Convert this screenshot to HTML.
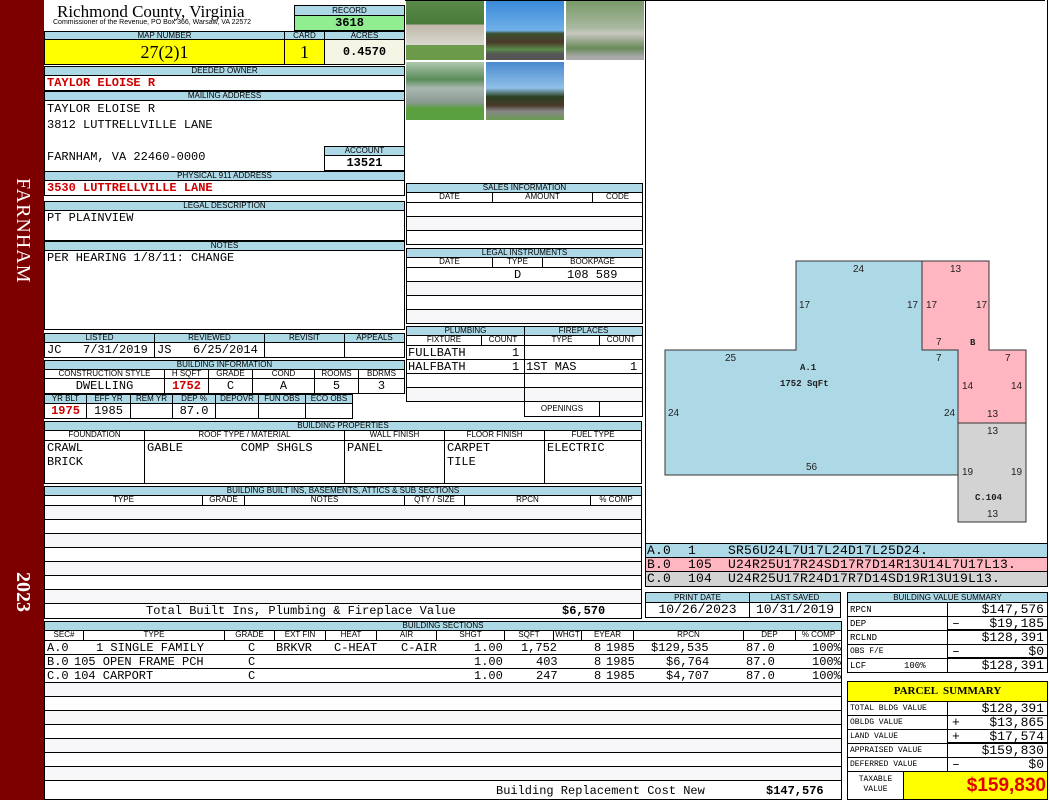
<!DOCTYPE html>
<html><head><meta charset="utf-8"><style>
*{margin:0;padding:0;box-sizing:border-box}
body{width:1050px;height:800px;position:relative;background:#fff;overflow:hidden;font-family:"Liberation Mono",monospace;font-size:12px;color:#000}
div,span.a{position:absolute}
span.a{top:0;white-space:pre}
.h{background:#add8e6;border:1px solid #000;font:8px "Liberation Sans",sans-serif;text-align:center;line-height:8px;white-space:nowrap;overflow:hidden}
.s{border:1px solid #000;font:8px "Liberation Sans",sans-serif;text-align:center;line-height:8px;white-space:nowrap;background:#fff}
.b{border:1px solid #000;background:#fff;white-space:pre;line-height:14px;padding-left:2px;overflow:hidden}
.c{text-align:center;padding:0}
.r{text-align:right;padding-right:3px}
.red{color:#d00000;font-weight:bold}
.bar{left:0;top:0;width:44px;height:800px;background:#7d0000}
.vt{color:#fff;font:20px "Liberation Serif",serif;transform:rotate(90deg);transform-origin:left top;white-space:nowrap}
.ph{border:1px solid #fff}
.cd{font-size:13px;letter-spacing:0.2px;line-height:13px}
</style></head><body>
<div class="bar"></div>
<div class="vt" style="left:34px;top:178px;letter-spacing:1px">FARNHAM</div>
<div class="vt" style="left:34px;top:572px;font-weight:bold">2023</div>

<div style="left:57px;top:2px;font:17px 'Liberation Serif',serif">Richmond County, Virginia</div>
<div style="left:53px;top:19px;font:7px 'Liberation Sans',sans-serif;white-space:nowrap">Commissioner of the Revenue, PO Box 366, Warsaw, VA 22572</div>
<div class="h" style="left:294px;top:5px;width:111px;height:11px;line-height:10px">RECORD</div>
<div class="b c" style="left:294px;top:15px;width:111px;height:16px;background:#90ee90;font-weight:bold;line-height:14px">3618</div>

<div class="h" style="left:44px;top:31px;width:241px;height:9px">MAP NUMBER</div>
<div class="h" style="left:284px;top:31px;width:41px;height:9px">CARD</div>
<div class="h" style="left:324px;top:31px;width:81px;height:9px">ACRES</div>
<div class="b c" style="left:44px;top:39px;width:241px;height:26px;background:#ffff00;font:18px 'Liberation Serif',serif;line-height:24px">27(2)1</div>
<div class="b c" style="left:284px;top:39px;width:41px;height:26px;background:#ffff00;font:18px 'Liberation Serif',serif;line-height:24px">1</div>
<div class="b c" style="left:324px;top:39px;width:81px;height:26px;background:#f5f5e6;font-weight:bold;line-height:24px">0.4570</div>

<div class="h" style="left:44px;top:66px;width:361px;height:10px">DEEDED OWNER</div>
<div class="b red" style="left:44px;top:75px;width:361px;height:16px">TAYLOR ELOISE R</div>
<div class="h" style="left:44px;top:91px;width:361px;height:10px">MAILING ADDRESS</div>
<div class="b" style="left:44px;top:100px;width:361px;height:72px;line-height:16px;padding-top:0">TAYLOR ELOISE R
3812 LUTTRELLVILLE LANE

FARNHAM, VA 22460-0000</div>
<div class="h" style="left:324px;top:146px;width:81px;height:10px">ACCOUNT</div>
<div class="b c" style="left:324px;top:155px;width:81px;height:16px;font-weight:bold">13521</div>
<div class="h" style="left:44px;top:171px;width:361px;height:10px">PHYSICAL 911 ADDRESS</div>
<div class="b red" style="left:44px;top:180px;width:361px;height:16px">3530 LUTTRELLVILLE LANE</div>
<div class="h" style="left:44px;top:201px;width:361px;height:10px">LEGAL DESCRIPTION</div>
<div class="b" style="left:44px;top:210px;width:361px;height:31px">PT PLAINVIEW</div>
<div class="h" style="left:44px;top:241px;width:361px;height:10px">NOTES</div>
<div class="b" style="left:44px;top:250px;width:361px;height:80px">PER HEARING 1/8/11: CHANGE</div>

<div class="h" style="left:44px;top:333px;width:111px;height:10px">LISTED</div>
<div class="h" style="left:154px;top:333px;width:111px;height:10px">REVIEWED</div>
<div class="h" style="left:264px;top:333px;width:81px;height:10px">REVISIT</div>
<div class="h" style="left:344px;top:333px;width:61px;height:10px">APPEALS</div>
<div class="b" style="left:44px;top:342px;width:111px;height:16px">JC   7/31/2019</div>
<div class="b" style="left:154px;top:342px;width:111px;height:16px">JS   6/25/2014</div>
<div class="b" style="left:264px;top:342px;width:81px;height:16px"></div>
<div class="b" style="left:344px;top:342px;width:61px;height:16px"></div>

<div class="h" style="left:44px;top:360px;width:361px;height:10px">BUILDING INFORMATION</div>
<div class="s" style="left:44px;top:369px;width:121px;height:10px">CONSTRUCTION STYLE</div>
<div class="s" style="left:164px;top:369px;width:45px;height:10px">H SQFT</div>
<div class="s" style="left:208px;top:369px;width:45px;height:10px">GRADE</div>
<div class="s" style="left:252px;top:369px;width:63px;height:10px">COND</div>
<div class="s" style="left:314px;top:369px;width:45px;height:10px">ROOMS</div>
<div class="s" style="left:358px;top:369px;width:47px;height:10px">BDRMS</div>
<div class="b c" style="left:44px;top:378px;width:121px;height:16px">DWELLING</div>
<div class="b c red" style="left:164px;top:378px;width:45px;height:16px">1752</div>
<div class="b c" style="left:208px;top:378px;width:45px;height:16px">C</div>
<div class="b c" style="left:252px;top:378px;width:63px;height:16px">A</div>
<div class="b c" style="left:314px;top:378px;width:45px;height:16px">5</div>
<div class="b c" style="left:358px;top:378px;width:47px;height:16px">3</div>
<div class="s" style="left:44px;top:394px;width:43px;height:10px;background:#add8e6">YR BLT</div>
<div class="s" style="left:86px;top:394px;width:45px;height:10px;background:#add8e6">EFF YR</div>
<div class="s" style="left:130px;top:394px;width:43px;height:10px;background:#add8e6">REM YR</div>
<div class="s" style="left:172px;top:394px;width:44px;height:10px;background:#add8e6">DEP %</div>
<div class="s" style="left:215px;top:394px;width:44px;height:10px;background:#add8e6">DEPOVR</div>
<div class="s" style="left:258px;top:394px;width:48px;height:10px;background:#add8e6">FUN OBS</div>
<div class="s" style="left:305px;top:394px;width:48px;height:10px;background:#add8e6">ECO OBS</div>
<div class="b c red" style="left:44px;top:403px;width:43px;height:16px">1975</div>
<div class="b c" style="left:86px;top:403px;width:45px;height:16px">1985</div>
<div class="b" style="left:130px;top:403px;width:43px;height:16px"></div>
<div class="b c" style="left:172px;top:403px;width:44px;height:16px">87.0</div>
<div class="b" style="left:215px;top:403px;width:44px;height:16px"></div>
<div class="b" style="left:258px;top:403px;width:48px;height:16px"></div>
<div class="b" style="left:305px;top:403px;width:48px;height:16px"></div>

<div class="h" style="left:44px;top:421px;width:598px;height:10px">BUILDING PROPERTIES</div>
<div class="s" style="left:44px;top:430px;width:101px;height:11px">FOUNDATION</div>
<div class="s" style="left:144px;top:430px;width:201px;height:11px">ROOF TYPE / MATERIAL</div>
<div class="s" style="left:344px;top:430px;width:101px;height:11px">WALL FINISH</div>
<div class="s" style="left:444px;top:430px;width:101px;height:11px">FLOOR FINISH</div>
<div class="s" style="left:544px;top:430px;width:98px;height:11px">FUEL TYPE</div>
<div class="b" style="left:44px;top:440px;width:101px;height:44px">CRAWL
BRICK</div>
<div class="b" style="left:144px;top:440px;width:201px;height:44px">GABLE        COMP SHGLS</div>
<div class="b" style="left:344px;top:440px;width:101px;height:44px">PANEL</div>
<div class="b" style="left:444px;top:440px;width:101px;height:44px">CARPET
TILE</div>
<div class="b" style="left:544px;top:440px;width:98px;height:44px">ELECTRIC</div>

<div class="h" style="left:44px;top:486px;width:598px;height:10px">BUILDING BUILT INS, BASEMENTS, ATTICS &amp; SUB SECTIONS</div>
<div class="s" style="left:44px;top:495px;width:159px;height:11px">TYPE</div>
<div class="s" style="left:202px;top:495px;width:43px;height:11px">GRADE</div>
<div class="s" style="left:244px;top:495px;width:161px;height:11px">NOTES</div>
<div class="s" style="left:404px;top:495px;width:61px;height:11px">QTY / SIZE</div>
<div class="s" style="left:464px;top:495px;width:127px;height:11px">RPCN</div>
<div class="s" style="left:590px;top:495px;width:52px;height:11px">% COMP</div>
<div class="b" style="left:44px;top:505px;width:598px;height:15px;background:#f7f7fa"></div>
<div class="b" style="left:44px;top:519px;width:598px;height:15px"></div>
<div class="b" style="left:44px;top:533px;width:598px;height:15px;background:#f7f7fa"></div>
<div class="b" style="left:44px;top:547px;width:598px;height:15px"></div>
<div class="b" style="left:44px;top:561px;width:598px;height:15px;background:#f7f7fa"></div>
<div class="b" style="left:44px;top:575px;width:598px;height:15px"></div>
<div class="b" style="left:44px;top:589px;width:598px;height:15px;background:#f7f7fa"></div>
<div class="b" style="left:44px;top:603px;width:598px;height:16px"><span class="a" style="left:101px">Total Built Ins, Plumbing &amp; Fireplace Value</span><span class="a" style="left:517px;font-weight:bold">$6,570</span></div>

<div class="h" style="left:44px;top:621px;width:798px;height:10px">BUILDING SECTIONS</div>
<div class="s" style="left:44px;top:630px;width:40px;height:11px">SEC#</div>
<div class="s" style="left:83px;top:630px;width:142px;height:11px">TYPE</div>
<div class="s" style="left:224px;top:630px;width:51px;height:11px">GRADE</div>
<div class="s" style="left:274px;top:630px;width:52px;height:11px">EXT FIN</div>
<div class="s" style="left:325px;top:630px;width:52px;height:11px">HEAT</div>
<div class="s" style="left:376px;top:630px;width:61px;height:11px">AIR</div>
<div class="s" style="left:436px;top:630px;width:69px;height:11px">SHGT</div>
<div class="s" style="left:504px;top:630px;width:50px;height:11px">SQFT</div>
<div class="s" style="left:553px;top:630px;width:29px;height:11px">WHGT</div>
<div class="s" style="left:581px;top:630px;width:53px;height:11px">EYEAR</div>
<div class="s" style="left:633px;top:630px;width:111px;height:11px">RPCN</div>
<div class="s" style="left:743px;top:630px;width:53px;height:11px">DEP</div>
<div class="s" style="left:795px;top:630px;width:47px;height:11px">% COMP</div>

<div class="b" style="left:44px;top:640px;width:798px;height:15px">
<span class="a" style="left:2px">A.0</span><span class="a" style="left:51px">1 SINGLE FAMILY</span><span class="a" style="left:203px">C</span><span class="a" style="left:231px">BRKVR</span><span class="a" style="left:289px">C-HEAT</span><span class="a" style="left:356px">C-AIR</span><span class="a" style="left:429px">1.00</span><span class="a" style="left:476px">1,752</span><span class="a" style="left:549px">8</span><span class="a" style="left:561px">1985</span><span class="a" style="left:606px">$129,535</span><span class="a" style="left:701px">87.0</span><span class="a" style="left:767px">100%</span></div>
<div class="b" style="left:44px;top:654px;width:798px;height:15px">
<span class="a" style="left:2px">B.0</span><span class="a" style="left:29px">105 OPEN FRAME PCH</span><span class="a" style="left:203px">C</span><span class="a" style="left:429px">1.00</span><span class="a" style="left:491px">403</span><span class="a" style="left:549px">8</span><span class="a" style="left:561px">1985</span><span class="a" style="left:621px">$6,764</span><span class="a" style="left:701px">87.0</span><span class="a" style="left:767px">100%</span></div>
<div class="b" style="left:44px;top:668px;width:798px;height:15px">
<span class="a" style="left:2px">C.0</span><span class="a" style="left:29px">104 CARPORT</span><span class="a" style="left:203px">C</span><span class="a" style="left:429px">1.00</span><span class="a" style="left:491px">247</span><span class="a" style="left:549px">8</span><span class="a" style="left:561px">1985</span><span class="a" style="left:621px">$4,707</span><span class="a" style="left:701px">87.0</span><span class="a" style="left:767px">100%</span></div>
<div class="b" style="left:44px;top:682px;width:798px;height:15px;background:#f7f7fa"></div>
<div class="b" style="left:44px;top:696px;width:798px;height:15px"></div>
<div class="b" style="left:44px;top:710px;width:798px;height:15px;background:#f7f7fa"></div>
<div class="b" style="left:44px;top:724px;width:798px;height:15px"></div>
<div class="b" style="left:44px;top:738px;width:798px;height:15px;background:#f7f7fa"></div>
<div class="b" style="left:44px;top:752px;width:798px;height:15px"></div>
<div class="b" style="left:44px;top:766px;width:798px;height:15px;background:#f7f7fa"></div>
<div class="b" style="left:44px;top:780px;width:798px;height:20px;line-height:20px"><span class="a" style="left:451px;line-height:20px">Building Replacement Cost New</span><span class="a" style="left:721px;font-weight:bold;line-height:20px">$147,576</span></div>

<!-- photos -->
<div class="ph" style="left:405px;top:0;width:80px;height:61px;background:linear-gradient(#5a8a4a 0,#4a7a3a 40%,#c0b8a8 40%,#d8d8d0 75%,#6a9a4a 75%)"></div>
<div class="ph" style="left:485px;top:0;width:80px;height:61px;background:linear-gradient(#3a8ad8 0,#70b0e8 50%,#3a5030 55%,#4a3a2a 70%,#5a8a4a 82%,#555 90%)"></div>
<div class="ph" style="left:565px;top:0;width:80px;height:61px;background:linear-gradient(#7a9a6a 0,#a8b8a0 45%,#c8c8c0 55%,#6a8a5a 80%,#aaa 95%)"></div>
<div class="ph" style="left:405px;top:61px;width:80px;height:60px;background:linear-gradient(#b0c8b0 0,#5a8a5a 30%,#a8b8b0 45%,#8a9a90 70%,#5aa040 80%)"></div>
<div class="ph" style="left:485px;top:61px;width:80px;height:60px;background:linear-gradient(#4a8ad0 0,#90c0e8 45%,#2a4020 60%,#4a3a2a 75%,#888 85%,#6a9a50 100%)"></div>
<div style="left:645px;top:0;width:1px;height:545px;background:#000"></div>
<div style="left:405px;top:0;width:640px;height:1px;background:#000"></div>
<div style="left:1047px;top:0;width:1px;height:545px;background:#000"></div>

<div class="h" style="left:406px;top:183px;width:237px;height:10px">SALES INFORMATION</div>
<div class="s" style="left:406px;top:192px;width:87px;height:11px">DATE</div>
<div class="s" style="left:492px;top:192px;width:101px;height:11px">AMOUNT</div>
<div class="s" style="left:592px;top:192px;width:51px;height:11px">CODE</div>
<div class="b" style="left:406px;top:202px;width:237px;height:15px"></div>
<div class="b" style="left:406px;top:216px;width:237px;height:15px;background:#f7f7fa"></div>
<div class="b" style="left:406px;top:230px;width:237px;height:15px"></div>
<div class="h" style="left:406px;top:248px;width:237px;height:10px">LEGAL INSTRUMENTS</div>
<div class="s" style="left:406px;top:257px;width:87px;height:11px">DATE</div>
<div class="s" style="left:492px;top:257px;width:51px;height:11px">TYPE</div>
<div class="s" style="left:542px;top:257px;width:101px;height:11px">BOOKPAGE</div>
<div class="b" style="left:406px;top:267px;width:237px;height:15px"><span class="a" style="left:107px">D</span><span class="a" style="left:160px">108 589</span></div>
<div class="b" style="left:406px;top:281px;width:237px;height:15px;background:#f7f7fa"></div>
<div class="b" style="left:406px;top:295px;width:237px;height:15px"></div>
<div class="b" style="left:406px;top:309px;width:237px;height:15px;background:#f7f7fa"></div>

<div class="h" style="left:406px;top:326px;width:119px;height:10px">PLUMBING</div>
<div class="h" style="left:524px;top:326px;width:119px;height:10px">FIREPLACES</div>
<div class="s" style="left:406px;top:335px;width:76px;height:11px">FIXTURE</div>
<div class="s" style="left:481px;top:335px;width:44px;height:11px">COUNT</div>
<div class="s" style="left:524px;top:335px;width:76px;height:11px">TYPE</div>
<div class="s" style="left:599px;top:335px;width:44px;height:11px">COUNT</div>
<div class="b" style="left:406px;top:345px;width:119px;height:15px"><span class="a" style="left:1px">FULLBATH</span><span class="a" style="left:105px">1</span></div>
<div class="b" style="left:406px;top:359px;width:119px;height:15px"><span class="a" style="left:1px">HALFBATH</span><span class="a" style="left:105px">1</span></div>
<div class="b" style="left:406px;top:373px;width:119px;height:15px"></div>
<div class="b" style="left:406px;top:387px;width:119px;height:15px;background:#f7f7fa"></div>
<div class="b" style="left:524px;top:345px;width:119px;height:15px"></div>
<div class="b" style="left:524px;top:359px;width:119px;height:15px"><span class="a" style="left:1px">1ST MAS</span><span class="a" style="left:105px">1</span></div>
<div class="b" style="left:524px;top:373px;width:119px;height:15px"></div>
<div class="b" style="left:524px;top:387px;width:119px;height:15px;background:#f7f7fa"></div>
<div class="s" style="left:524px;top:401px;width:76px;height:16px;line-height:14px">OPENINGS</div>
<div class="b" style="left:599px;top:401px;width:44px;height:16px"></div>

<!-- sketch -->
<svg style="position:absolute;left:0;top:0" width="1050" height="545" font-family="Liberation Sans,sans-serif" font-size="10">
<polygon points="665,350 796,350 796,261 922,261 922,350 958,350 958,475 665,475" fill="#add8e6" stroke="#333"/>
<polygon points="922,261 989,261 989,350 1026,350 1026,423 958,423 958,350 922,350" fill="#ffb6c1" stroke="#333"/>
<polygon points="958,423 1026,423 1026,522 958,522" fill="#d3d3d3" stroke="#333"/>
<g fill="#222">
<text x="853" y="272">24</text><text x="799" y="308">17</text><text x="907" y="308">17</text>
<text x="725" y="361">25</text><text x="668" y="416">24</text><text x="944" y="416">24</text><text x="806" y="470">56</text>
<text x="936" y="345">7</text><text x="936" y="361">7</text>
<text x="950" y="272">13</text><text x="926" y="308">17</text><text x="976" y="308">17</text>
<text x="1005" y="361">7</text><text x="962" y="389">14</text><text x="1011" y="389">14</text><text x="987" y="417">13</text>
<text x="987" y="434">13</text><text x="962" y="475">19</text><text x="1011" y="475">19</text><text x="987" y="517">13</text>
<g font-family="Liberation Mono,monospace" font-size="9" font-weight="bold">
<text x="800" y="370">A.1</text><text x="780" y="386">1752 SqFt</text><text x="970" y="345">B</text><text x="975" y="500">C.104</text></g>
</g></svg>

<div class="b cd" style="left:645px;top:543px;width:403px;height:15px;background:#add8e6"><span class="a" style="left:1px">A.0</span><span class="a" style="left:42px">1</span><span class="a" style="left:82px">SR56U24L7U17L24D17L25D24.</span></div>
<div class="b cd" style="left:645px;top:557px;width:403px;height:15px;background:#ffb6c1"><span class="a" style="left:1px">B.0</span><span class="a" style="left:42px">105</span><span class="a" style="left:82px">U24R25U17R24SD17R7D14R13U14L7U17L13.</span></div>
<div class="b cd" style="left:645px;top:571px;width:403px;height:16px;background:#d3d3d3;line-height:14px"><span class="a" style="left:1px">C.0</span><span class="a" style="left:42px">104</span><span class="a" style="left:82px">U24R25U17R24D17R7D14SD19R13U19L13.</span></div>

<div class="h" style="left:645px;top:592px;width:105px;height:11px;line-height:9px">PRINT DATE</div>
<div class="h" style="left:749px;top:592px;width:92px;height:11px;line-height:9px">LAST SAVED</div>
<div class="b c" style="left:645px;top:602px;width:105px;height:16px;font-size:13px">10/26/2023</div>
<div class="b c" style="left:749px;top:602px;width:92px;height:16px;font-size:13px">10/31/2019</div>

<div class="h" style="left:847px;top:592px;width:201px;height:11px;line-height:9px">BUILDING VALUE SUMMARY</div>
<div style="left:847px;top:602px;width:201px;font-size:9px">
<div class="b" style="left:0;top:0;width:101px;height:15px;font-size:9px">RPCN</div><div class="b r" style="left:100px;top:0;width:101px;height:15px;font-size:13px;line-height:13px">$147,576</div>
<div class="b" style="left:0;top:14px;width:101px;height:15px;font-size:9px">DEP</div><div class="b r" style="left:100px;top:14px;width:101px;height:15px;font-size:13px;line-height:13px;border-bottom:2px solid #000"><span style="float:left;padding-left:2px">–</span>$19,185</div>
<div class="b" style="left:0;top:28px;width:101px;height:15px;font-size:9px">RCLND</div><div class="b r" style="left:100px;top:28px;width:101px;height:15px;font-size:13px;line-height:13px">$128,391</div>
<div class="b" style="left:0;top:42px;width:101px;height:15px;font-size:8px">OBS F/E</div><div class="b r" style="left:100px;top:42px;width:101px;height:15px;font-size:13px;line-height:13px;border-bottom:2px solid #000"><span style="float:left;padding-left:2px">–</span>$0</div>
<div class="b" style="left:0;top:56px;width:101px;height:15px;font-size:9px">LCF       100%</div><div class="b r" style="left:100px;top:56px;width:101px;height:15px;font-size:13px;line-height:13px">$128,391</div>
</div>

<div class="b c" style="left:847px;top:681px;width:201px;height:21px;background:#ffff00;font-weight:bold;font-size:11px;line-height:19px;font-family:'Liberation Serif',serif">PARCEL  SUMMARY</div>
<div style="left:847px;top:701px;width:201px">
<div class="b" style="left:0;top:0;width:101px;height:15px;font-size:8px">TOTAL BLDG VALUE</div><div class="b r" style="left:100px;top:0;width:101px;height:15px;font-size:13px;line-height:13px">$128,391</div>
<div class="b" style="left:0;top:14px;width:101px;height:15px;font-size:8px">OBLDG VALUE</div><div class="b r" style="left:100px;top:14px;width:101px;height:15px;font-size:13px;line-height:13px"><span style="float:left;padding-left:2px">+</span>$13,865</div>
<div class="b" style="left:0;top:28px;width:101px;height:15px;font-size:8px">LAND VALUE</div><div class="b r" style="left:100px;top:28px;width:101px;height:15px;font-size:13px;line-height:13px;border-bottom:2px solid #000"><span style="float:left;padding-left:2px">+</span>$17,574</div>
<div class="b" style="left:0;top:42px;width:101px;height:15px;font-size:8px">APPRAISED VALUE</div><div class="b r" style="left:100px;top:42px;width:101px;height:15px;font-size:13px;line-height:13px">$159,830</div>
<div class="b" style="left:0;top:56px;width:101px;height:15px;font-size:8px">DEFERRED VALUE</div><div class="b r" style="left:100px;top:56px;width:101px;height:15px;font-size:13px;line-height:13px"><span style="float:left;padding-left:2px">–</span>$0</div>
<div class="b c" style="left:0;top:70px;width:57px;height:29px;font-size:8px;line-height:10px;padding-top:3px">TAXABLE
VALUE</div>
<div class="b r" style="left:56px;top:70px;width:145px;height:29px;background:#ffff00;color:#e00000;font:bold 19px 'Liberation Sans',sans-serif;line-height:27px;padding-right:1px">$159,830</div>
</div>
</body></html>
